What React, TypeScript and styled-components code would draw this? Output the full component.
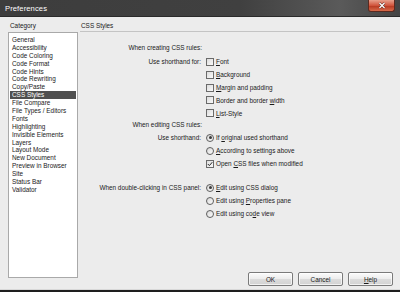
import * as React from 'react';
import styled, { createGlobalStyle } from 'styled-components';

const GlobalStyle = createGlobalStyle`
    html, body {
        margin: 0;
        padding: 0;
        background: #1e1e1e;
    }
    * {
        box-sizing: border-box;
    }
`;

const Window = styled.div`
    width: 400px;
    height: 292px;
    display: flex;
    flex-direction: column;
    background: #1e1e1e;
    font-family: 'Liberation Sans', Arial, sans-serif;
    font-size: 6.4px;
    color: #1a1a1a;
    overflow: hidden;
`;

const TitleBar = styled.div`
    position: relative;
    height: 17px;
    flex: none;
    display: flex;
    align-items: center;
    padding-left: 5px;
    background: linear-gradient(to right, #3d3d3d 0%, #404040 60%, #5a5a5a 85%, #444 100%);
    border-bottom: 1px solid #2a2a2a;
`;

const Title = styled.span`
    color: #fff;
    font-size: 7.6px;
    letter-spacing: 0.1px;
`;

const CloseButton = styled.div`
    position: absolute;
    top: 0;
    right: 5px;
    width: 27px;
    height: 12px;
    border: 1px solid #5a2a20;
    border-top: none;
    border-radius: 0 0 3px 3px;
    background: linear-gradient(to bottom, #e8a08c 0%, #d0543c 50%, #b83a22 55%, #d86a4a 100%);
    display: flex;
    align-items: center;
    justify-content: center;
`;

const Body = styled.div`
    height: 273px;
    flex: none;
    display: flex;
    gap: 2px;
    padding: 4px 7px 3px 8px;
    background: #ececec;
    border-bottom: 1px solid #d8d8d8;
`;

const CategoryColumn = styled.div`
    width: 70px;
    flex: none;
    display: flex;
    flex-direction: column;
`;

const SmallLabel = styled.div`
    height: 9px;
    line-height: 9px;
    padding-left: 2px;
    margin-bottom: 2px;
`;

const List = styled.ul`
    list-style: none;
    margin: 0;
    padding: 3px 1px;
    height: 246px;
    background: #fff;
    border: 1px solid #a9a9a9;
`;

const ListItem = styled.li<{ $selected?: boolean }>`
    height: 7.9px;
    line-height: 7.9px;
    padding-left: 2px;
    white-space: nowrap;
    background: ${p => (p.$selected ? '#4f4f4f' : 'transparent')};
    color: ${p => (p.$selected ? '#fff' : '#1a1a1a')};
`;

const Pane = styled.div`
    flex: 1;
    display: flex;
    flex-direction: column;
`;

const PaneHeader = styled.div`
    height: 11px;
    line-height: 10px;
    padding-left: 1px;
    margin-right: 3px;
    border-bottom: 1px solid #c4c4c4;
`;

const Form = styled.div`
    padding-top: 11px;
    flex: 1;
`;

const Heading = styled.div<{ $gap?: number }>`
    width: 122px;
    height: 10px;
    line-height: 10px;
    text-align: right;
    margin-top: ${p => p.$gap ?? 0}px;
`;

const Section = styled.div<{ $gap?: number }>`
    display: grid;
    grid-template-columns: 121px auto;
    column-gap: 5px;
    grid-auto-rows: 12.8px;
    margin-top: ${p => p.$gap ?? 0}px;
`;

const RowLabel = styled.div`
    grid-column: 1;
    text-align: right;
    line-height: 12.8px;
    white-space: nowrap;
`;

const Option = styled.label`
    grid-column: 2;
    display: flex;
    align-items: center;
    gap: 2px;
    white-space: nowrap;
`;

const Box = styled.span`
    width: 8px;
    height: 8px;
    flex: none;
    border: 1px solid #6a6a6a;
    background: linear-gradient(135deg, #dcdcdc 0%, #fafafa 100%);
    display: flex;
    align-items: center;
    justify-content: center;
`;

const Radio = styled.span<{ $on?: boolean }>`
    width: 8px;
    height: 8px;
    flex: none;
    border: 1px solid #5e5e5e;
    border-radius: 50%;
    background: linear-gradient(135deg, #d8d8d8 0%, #fcfcfc 100%);
    display: flex;
    align-items: center;
    justify-content: center;
    &::after {
        content: '';
        display: ${p => (p.$on ? 'block' : 'none')};
        width: 3px;
        height: 3px;
        border-radius: 50%;
        background: #3a3a3a;
    }
`;

const Key = styled.span`
    text-decoration: underline;
    text-underline-offset: 1px;
`;

const Footer = styled.div`
    display: flex;
    justify-content: flex-end;
    gap: 5px;
    padding-right: 0;
    margin-bottom: 0;
`;

const Button = styled.button`
    width: 45px;
    height: 14px;
    padding: 0;
    font-family: inherit;
    font-size: 6.4px;
    color: #1a1a1a;
    border: 1px solid #7a7a7a;
    border-radius: 2px;
    background: linear-gradient(to bottom, #fbfbfb 0%, #ececec 50%, #dcdcdc 52%, #d2d2d2 100%);
    box-shadow: inset 0 0 0 1px rgba(255, 255, 255, 0.7);
`;

const categories = [
    'General', 'Accessibility', 'Code Coloring', 'Code Format', 'Code Hints',
    'Code Rewriting', 'Copy/Paste', 'CSS Styles', 'File Compare', 'File Types / Editors',
    'Fonts', 'Highlighting', 'Invisible Elements', 'Layers', 'Layout Mode',
    'New Document', 'Preview in Browser', 'Site', 'Status Bar', 'Validator',
];

const Check = () => (
    <svg width="6" height="6" viewBox="0 0 6 6">
        <path d="M0.8 3 L2.4 4.6 L5.3 1.2" fill="none" stroke="#2a2a2a" strokeWidth="1" />
    </svg>
);

const App: React.FunctionComponent = () => (
    <Window>
        <GlobalStyle />
        <TitleBar>
            <Title>Preferences</Title>
            <CloseButton>
                <svg width="8" height="7" viewBox="0 0 8 7">
                    <path d="M1.5 1 L6.5 6 M6.5 1 L1.5 6" stroke="#5a2a20" strokeWidth="2.4" />
                    <path d="M1.5 1 L6.5 6 M6.5 1 L1.5 6" stroke="#fff" strokeWidth="1.3" />
                </svg>
            </CloseButton>
        </TitleBar>
        <Body>
            <CategoryColumn>
                <SmallLabel>Category</SmallLabel>
                <List>
                    {categories.map(c => (
                        <ListItem key={c} $selected={c === 'CSS Styles'}>{c}</ListItem>
                    ))}
                </List>
            </CategoryColumn>
            <Pane>
                <PaneHeader>CSS Styles</PaneHeader>
                <Form>
                    <Heading>When creating CSS rules:</Heading>
                    <Section $gap={2.6}>
                        <RowLabel>Use shorthand for:</RowLabel>
                        <Option><Box /><span><Key>F</Key>ont</span></Option>
                        <Option><Box /><span><Key>B</Key>ackground</span></Option>
                        <Option><Box /><span><Key>M</Key>argin and padding</span></Option>
                        <Option><Box /><span>Border and border <Key>w</Key>idth</span></Option>
                        <Option><Box /><span><Key>L</Key>ist-Style</span></Option>
                    </Section>
                    <Heading>When editing CSS rules:</Heading>
                    <Section $gap={2}>
                        <RowLabel>Use shorthand:</RowLabel>
                        <Option><Radio $on /><span>If <Key>o</Key>riginal used shorthand</span></Option>
                        <Option><Radio /><span><Key>A</Key>ccording to settings above</span></Option>
                        <Option><Box><Check /></Box><span>Open <Key>C</Key>SS files when modified</span></Option>
                    </Section>
                    <Section $gap={11.6}>
                        <RowLabel>When double-clicking in CSS panel:</RowLabel>
                        <Option><Radio $on /><span><Key>E</Key>dit using CSS dialog</span></Option>
                        <Option><Radio /><span>Edit using <Key>P</Key>roperties pane</span></Option>
                        <Option><Radio /><span>Edit using co<Key>d</Key>e view</span></Option>
                    </Section>
                </Form>
                <Footer>
                    <Button>OK</Button>
                    <Button>Cancel</Button>
                    <Button><Key>H</Key>elp</Button>
                </Footer>
            </Pane>
        </Body>
    </Window>
);

export default App;
